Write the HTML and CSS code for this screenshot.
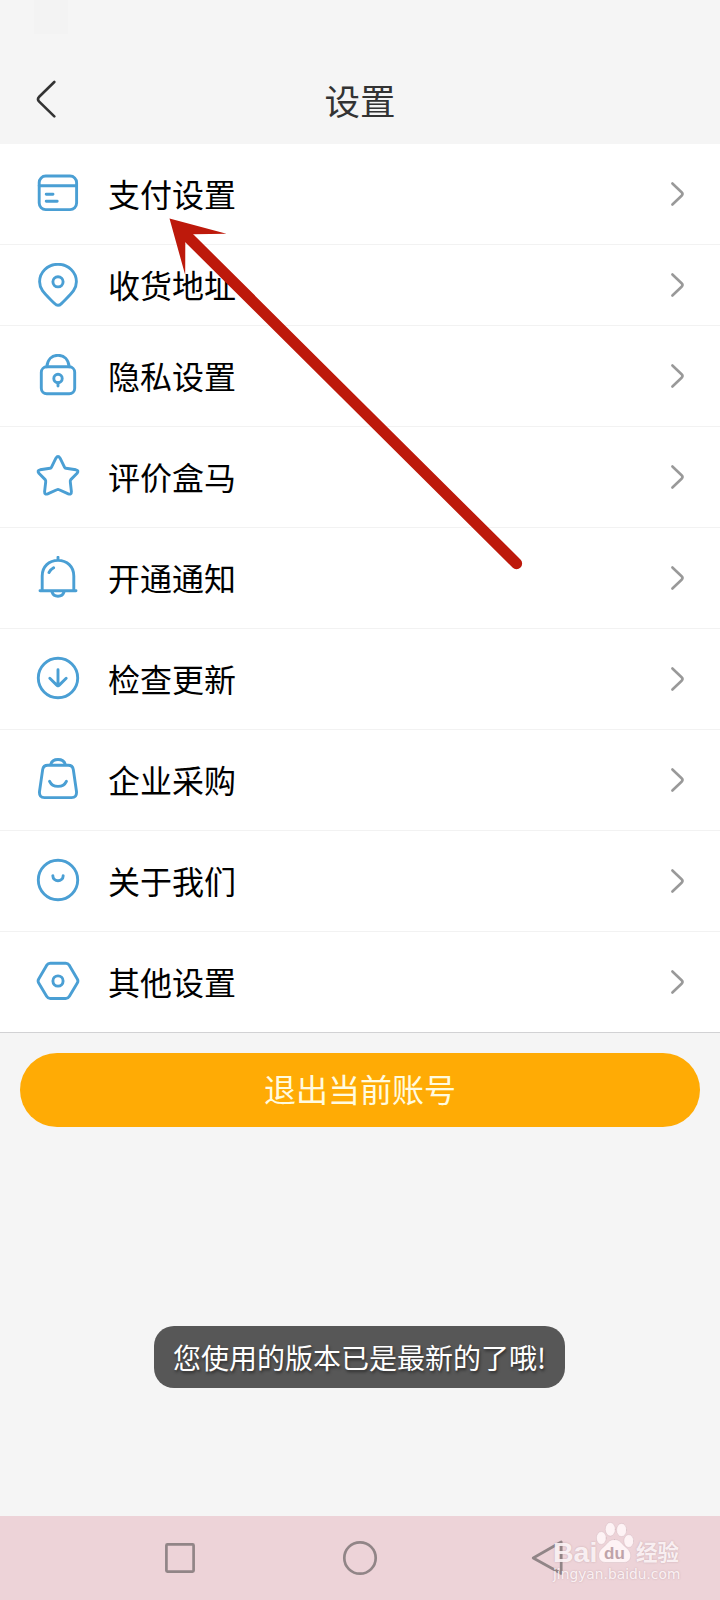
FILE: index.html
```html
<!DOCTYPE html>
<html lang="zh-CN">
<head>
<meta charset="utf-8">
<title>设置</title>
<link rel="stylesheet" href="styles.css">
</head>
<body>
<div class="screen">
  <header class="header">
    <div class="status"><span class="status-block"></span></div>
    <div class="titlebar">
      <svg class="back" width="24" height="40" viewBox="0 0 24 40"><path d="M18.3 2 3.2 16.8Q.8 19.2 3.2 21.6L18.3 36.4"/></svg>
      <h1 class="title">设置</h1>
    </div>
  </header>

  <main class="list">
    <div class="row">
      <svg class="icon" viewBox="0 0 44 44"><rect x="3.2" y="5" width="37.4" height="33.6" rx="6.5"/><path d="M3.2 14.7H40.6M10.2 23.2H17M10.2 30.2H21.2"/></svg>
      <span class="label">支付设置</span>
      <svg class="chevron" viewBox="0 0 16 26"><path d="M2.400 2.5 11.6 11.2Q13.400 13 11.6 14.8L2.400 23.5"/></svg>
    </div>
    <div class="row row-short">
      <svg class="icon icon-low" viewBox="0 0 44 44"><path d="M22 1.3C11.5 1.3 3.6 9.2 3.6 18.8C3.6 26.8 9.3 31 18.6 40.6Q22 44 25.4 40.6C34.7 31 40.4 26.8 40.4 18.8C40.4 9.2 32.5 1.3 22 1.3Z"/><circle cx="22" cy="18.8" r="5.1"/></svg>
      <span class="label">收货地址</span>
      <svg class="chevron" viewBox="0 0 16 26"><path d="M2.400 2.5 11.6 11.2Q13.400 13 11.6 14.8L2.400 23.5"/></svg>
    </div>
    <div class="row">
      <svg class="icon icon-low" viewBox="0 0 44 44"><rect x="5.3" y="12.8" width="33.4" height="27" rx="5.5"/><path d="M10.8 12.8C11.5 5.5 16 1.3 22 1.3S32.5 5.5 33.2 12.8M22 28.8V32"/><circle cx="22" cy="24.5" r="4.2"/></svg>
      <span class="label">隐私设置</span>
      <svg class="chevron" viewBox="0 0 16 26"><path d="M2.400 2.5 11.6 11.2Q13.400 13 11.6 14.8L2.400 23.5"/></svg>
    </div>
    <div class="row">
      <svg class="icon icon-low" viewBox="0 0 44 44"><path d="M19.9 3.2Q22 -.2 24.1 3.2L28.6 12.3Q29 13.1 30 13.3L39.9 14.8Q43.2 15.6 41.1 18.3L34.8 24.6Q34.1 25.5 34.3 26.8L35.4 36.6Q35.5 40 32.3 38.9L23.2 34.8Q22 34.2 20.8 34.8L11.7 38.9Q8.5 40 8.6 36.6L9.7 26.8Q9.9 25.5 9.2 24.6L2.9 18.3Q.8 15.6 4.1 14.8L14 13.3Q15 13.1 15.4 12.3Z"/></svg>
      <span class="label">评价盒马</span>
      <svg class="chevron" viewBox="0 0 16 26"><path d="M2.400 2.5 11.6 11.2Q13.400 13 11.6 14.8L2.400 23.5"/></svg>
    </div>
    <div class="row">
      <svg class="icon icon-low" viewBox="0 0 44 44"><path d="M6.2 34V20C6.2 10.5 13 4.4 22 4.4S37.8 10.5 37.8 20V34M4 34.7H40M22 1.2V4M13 16.5Q14.6 13.4 17.6 11.8M16 36C17 39 19 40.2 22 40.2S27 39 28 36"/></svg>
      <span class="label">开通通知</span>
      <svg class="chevron" viewBox="0 0 16 26"><path d="M2.400 2.5 11.6 11.2Q13.400 13 11.6 14.8L2.400 23.5"/></svg>
    </div>
    <div class="row">
      <svg class="icon" viewBox="0 0 44 44"><circle cx="22" cy="22" r="19.7"/><path d="M22 13.8V30M13.8 22.2 20.5 28.9Q22 30.4 23.5 28.9L30.2 22.2"/></svg>
      <span class="label">检查更新</span>
      <svg class="chevron" viewBox="0 0 16 26"><path d="M2.400 2.5 11.6 11.2Q13.400 13 11.6 14.8L2.400 23.5"/></svg>
    </div>
    <div class="row">
      <svg class="icon" viewBox="0 0 44 44"><path d="M11.8 8.2H32.2Q36.6 8.2 37.3 12.4L40.5 34.5Q41 40.6 35.5 40.6H8.5Q3 40.6 3.5 34.5L6.7 12.4Q7.4 8.2 11.8 8.2ZM14.6 7.8C15.6 3.8 18.5 2.5 22 2.5S28.4 3.8 29.4 7.8M13.6 24.3C16.6 31 27.4 31 30.4 24.3"/></svg>
      <span class="label">企业采购</span>
      <svg class="chevron" viewBox="0 0 16 26"><path d="M2.400 2.5 11.6 11.2Q13.400 13 11.6 14.8L2.400 23.5"/></svg>
    </div>
    <div class="row">
      <svg class="icon" viewBox="0 0 44 44"><circle cx="22" cy="22" r="19.7"/><path d="M16.8 17.6C17 24.5 27 24.5 27.2 17.6"/></svg>
      <span class="label">关于我们</span>
      <svg class="chevron" viewBox="0 0 16 26"><path d="M2.400 2.5 11.6 11.2Q13.400 13 11.6 14.8L2.400 23.5"/></svg>
    </div>
    <div class="row row-last">
      <svg class="icon" viewBox="0 0 44 44"><path d="M14.3 4.3H29.7Q32 4.3 33.4 6.4L41.3 20Q42.5 22 41.3 24L33.4 37.2Q32 39.5 29.7 39.5H14.3Q12 39.5 10.6 37.2L2.7 24Q1.5 22 2.7 20L10.6 6.4Q12 4.3 14.3 4.3Z"/><circle cx="22" cy="22" r="5.1"/></svg>
      <span class="label">其他设置</span>
      <svg class="chevron" viewBox="0 0 16 26"><path d="M2.400 2.5 11.6 11.2Q13.400 13 11.6 14.8L2.400 23.5"/></svg>
    </div>
  </main>

  <section class="actions">
    <button class="logout">退出当前账号</button>
    <div class="toast">您使用的版本已是最新的了哦!</div>
  </section>

  <nav class="navbar">
    <svg width="36" height="36" viewBox="0 0 36 36"><rect x="4.4" y="4.4" width="27.2" height="27.2" rx="1"/></svg>
    <svg width="36" height="36" viewBox="0 0 36 36"><circle cx="18" cy="18" r="15.7"/></svg>
    <svg width="36" height="36" viewBox="0 0 36 36"><path d="M6.2 18 34.2 2V33.5Z"/></svg>
  </nav>

  <svg class="arrow" width="370" height="370" viewBox="160 210 370 370"><path class="shaft" d="M189 238 516.5 563.5"/><path class="head" d="M169.5 218.5 226.5 233.8 193 234.2 185.3 242 185.2 275Z"/></svg>

  <div class="watermark">
    <div class="brand">
      <span class="bai">Bai</span>
      <svg class="paw" width="38" height="42" viewBox="0 0 38 42"><ellipse cx="5.3" cy="17" rx="4.9" ry="6.4"/><ellipse cx="14.3" cy="8.3" rx="5" ry="6.8"/><ellipse cx="25.6" cy="9" rx="5" ry="6.6"/><ellipse cx="32.8" cy="20" rx="4.9" ry="6.4"/><path d="M18.500 18.500C12.500 18.500 11.500 23 7 26.500C.5 31 1.500 41.500 9.500 41.500H28C36 41.500 37 31.500 30 26.500C25.500 23 24.500 18.500 18.500 18.500Z"/><text x="18.5" y="38">du</text></svg>
      <span class="jy">经验</span>
    </div>
    <div class="url">jingyan.baidu.com</div>
  </div>
</div>
</body>
</html>
```
FILE: styles.css
```css
* { box-sizing: border-box; }
body {
  margin: 0;
  font-family: "Noto Sans CJK SC", sans-serif;
  background: #f5f5f5;
}
.screen {
  position: relative;
  width: 720px;
  height: 1600px;
  display: flex;
  flex-direction: column;
  overflow: hidden;
  background: #f5f5f5;
}
svg { display: block; flex: none; fill: none; stroke-linecap: round; stroke-linejoin: round; }

.header { height: 144px; background: #f5f5f5; }
.status { height: 56px; padding-left: 34px; }
.status-block { display: block; width: 34px; height: 34px; background: #f3f3f3; }
.titlebar {
  height: 88px;
  display: grid;
  grid-template-columns: 60px 1fr 60px;
  padding: 0 36px;
}
.back { margin-top: 24px; stroke: #333; stroke-width: 2.6; }
.title {
  margin: 18px 0 0;
  text-align: center;
  font-size: 35.5px;
  line-height: 52px;
  font-weight: 400;
  color: #333;
}

.list { background: #fff; }
.row {
  height: 101px;
  display: flex;
  align-items: center;
  padding: 0 34px 0 36px;
  border-bottom: 1px solid #f2f2f2;
}
.row-short { height: 81px; }
.row-last { border-bottom-color: #d2d2d4; }
.icon { width: 44px; height: 44px; margin-top: -2px; stroke: #4a9fd4; stroke-width: 2.9; }
.icon-low { margin-top: 0; }
.label {
  flex: 1;
  margin: -3px 0 0 28px;
  font-size: 32px;
  line-height: 46px;
  color: #000;
}
.chevron { width: 16px; height: 26px; margin-top: -1px; stroke: #999; stroke-width: 2.6; }

.actions {
  flex: 1;
  display: flex;
  flex-direction: column;
  align-items: center;
  padding: 20px 20px 0;
}
.logout {
  width: 680px;
  height: 74px;
  border: 0;
  border-radius: 37px;
  background: #ffab05;
  color: #fffbe0;
  font: 400 32px/46px "Noto Sans CJK SC", sans-serif;
  padding: 0 0 4px;
}
.toast {
  width: 411px;
  height: 62px;
  margin: 199px 1px 0 0;
  border-radius: 20px;
  background: #575757;
  color: #fff;
  font-size: 28px;
  line-height: 62px;
  text-align: center;
  white-space: nowrap;
  text-shadow: 1px 2px 3px rgba(0, 0, 0, .5);
}

.navbar {
  height: 84px;
  display: grid;
  grid-template-columns: 180px 185px 36px;
  padding: 24px 0 0 162px;
  background: #edd3d8;
}
.navbar svg { stroke: #918587; stroke-width: 2.7; }

.arrow { position: absolute; left: 160px; top: 210px; }
.shaft { stroke: #bd190b; stroke-width: 11.3; }
.head { fill: #bd190b; }

.watermark {
  position: absolute;
  left: 553px;
  top: 1520px;
  width: 130px;
  color: rgba(255, 248, 250, .9);
  text-shadow: 0 0 2px rgba(140, 110, 115, .4);
}
.brand { display: flex; height: 44px; }
.bai { width: 43px; font: 700 28.5px/64px "Liberation Sans", sans-serif; }
.paw { margin-top: 1px; }
.paw ellipse, .paw path { fill: rgba(255, 246, 248, .9); stroke: rgba(160, 130, 136, .3); stroke-width: .6; }
.paw text { fill: #bfa3a9; font: 700 17px "Liberation Sans", sans-serif; text-anchor: middle; text-shadow: none; }
.jy { margin-left: 2px; font-size: 21.5px; line-height: 62px; font-weight: 700; }
.url { font: 400 13.8px/20px "DejaVu Sans", sans-serif; white-space: nowrap; }
```
